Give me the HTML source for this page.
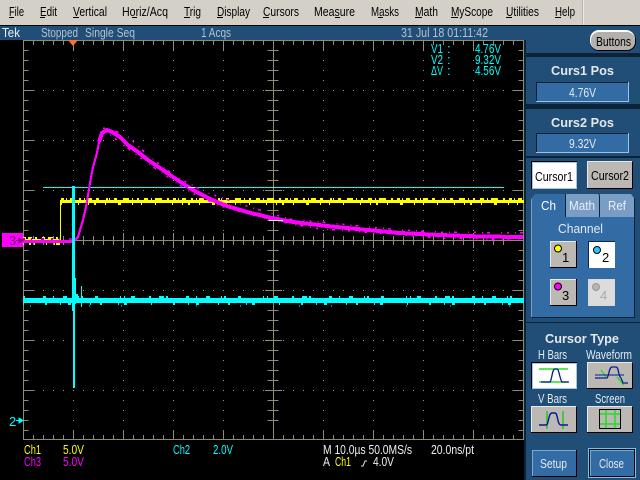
<!DOCTYPE html>
<html><head><meta charset="utf-8"><title>Tek</title>
<style>
html,body{margin:0;padding:0;background:#000;width:640px;height:480px;overflow:hidden}
svg{display:block}
text{font-family:"Liberation Sans",sans-serif;font-size:12px}
.m{font-size:13px;fill:#000}
.h{font-size:12.5px;fill:#b4c2d0}
.c{fill:#00ffff;font-size:13px}
.y{fill:#ffff00;font-size:13px}
.g{fill:#ff00ff;font-size:13px}
.w{fill:#f0f0f0;font-size:13px}
.t{fill:#e4e8ee;font-size:13px;font-weight:bold}
.l{fill:#e4eaf0;font-size:13px}
.k{fill:#000;font-size:13px}
.cr{shape-rendering:crispEdges}
</style></head><body>
<svg width="640" height="480" viewBox="0 0 640 480" xmlns="http://www.w3.org/2000/svg">
<rect width="640" height="480" fill="#000"/>
<!-- menu -->
<rect width="640" height="25" fill="#d4d0c8"/>
<rect x="582" y="0" width="1" height="25" fill="#b8b4ac"/>
<rect x="583" y="0" width="1" height="25" fill="#ece9e2"/>
<text class="m" x="9" y="16" textLength="15" lengthAdjust="spacingAndGlyphs">File</text>
<text class="m" x="40" y="16" textLength="17" lengthAdjust="spacingAndGlyphs">Edit</text>
<text class="m" x="73" y="16" textLength="34" lengthAdjust="spacingAndGlyphs">Vertical</text>
<text class="m" x="122" y="16" textLength="46" lengthAdjust="spacingAndGlyphs">Horiz/Acq</text>
<text class="m" x="184" y="16" textLength="17" lengthAdjust="spacingAndGlyphs">Trig</text>
<text class="m" x="217" y="16" textLength="33" lengthAdjust="spacingAndGlyphs">Display</text>
<text class="m" x="263" y="16" textLength="36" lengthAdjust="spacingAndGlyphs">Cursors</text>
<text class="m" x="314" y="16" textLength="41" lengthAdjust="spacingAndGlyphs">Measure</text>
<text class="m" x="371" y="16" textLength="28" lengthAdjust="spacingAndGlyphs">Masks</text>
<text class="m" x="415" y="16" textLength="23" lengthAdjust="spacingAndGlyphs">Math</text>
<text class="m" x="451" y="16" textLength="42" lengthAdjust="spacingAndGlyphs">MyScope</text>
<text class="m" x="506" y="16" textLength="33" lengthAdjust="spacingAndGlyphs">Utilities</text>
<text class="m" x="555" y="16" textLength="20" lengthAdjust="spacingAndGlyphs">Help</text>
<g fill="#000" class="cr">
<rect x="9" y="17" width="5" height="1"/><rect x="40" y="17" width="5" height="1"/><rect x="73" y="17" width="6" height="1"/>
<rect x="132" y="17" width="5" height="1"/><rect x="184" y="17" width="6" height="1"/><rect x="217" y="17" width="6" height="1"/>
<rect x="263" y="17" width="6" height="1"/><rect x="335" y="17" width="5" height="1"/><rect x="378" y="17" width="5" height="1"/>
<rect x="415" y="17" width="7" height="1"/><rect x="451" y="17" width="7" height="1"/><rect x="506" y="17" width="6" height="1"/><rect x="555" y="17" width="6" height="1"/>
</g>
<rect y="25" width="640" height="1" fill="#000"/>
<rect y="26" width="640" height="14" fill="#214e76"/>
<text x="2" y="37" style="fill:#e8eef4;font-size:13px" textLength="18" lengthAdjust="spacingAndGlyphs">Tek</text>
<text class="h" x="41" y="37" textLength="37" lengthAdjust="spacingAndGlyphs">Stopped</text>
<text class="h" x="85" y="37" textLength="50" lengthAdjust="spacingAndGlyphs">Single Seq</text>
<text class="h" x="201" y="37" textLength="30" lengthAdjust="spacingAndGlyphs">1 Acqs</text>
<text class="h" x="401" y="37" textLength="87" lengthAdjust="spacingAndGlyphs">31 Jul 18 01:11:42</text>

<!-- right panel -->
<rect x="524" y="40" width="116" height="440" fill="#214e76"/>
<rect x="524" y="53" width="116" height="4" fill="#0c2236"/>
<rect x="524" y="104" width="116" height="5" fill="#0c2236"/>
<rect x="524" y="156" width="116" height="2" fill="#0c2236"/>
<rect x="524" y="322" width="116" height="1" fill="#0c2236"/>
<rect x="524" y="40" width="2" height="440" fill="#0c2236"/>
<!-- Buttons pill -->
<rect x="590" y="31" width="46" height="20" rx="9" fill="#000"/>
<rect x="590" y="30" width="45" height="20" rx="9" fill="#fff"/>
<rect x="591" y="32" width="44" height="18" rx="8" fill="#b4b0ac"/>
<text class="k" x="596" y="46" textLength="35" lengthAdjust="spacingAndGlyphs">Buttons</text>

<!-- Curs pos -->
<text class="t" x="551" y="75" textLength="63" lengthAdjust="spacingAndGlyphs">Curs1 Pos</text>
<rect x="536" y="82" width="93" height="20" fill="#9fc0de"/><rect x="536" y="82" width="92" height="19" fill="#0c2236"/><rect x="537" y="83" width="91" height="18" fill="#336ca5"/>
<text class="l" x="569" y="97" textLength="27" lengthAdjust="spacingAndGlyphs">4.76V</text>
<text class="t" x="551" y="127" textLength="63" lengthAdjust="spacingAndGlyphs">Curs2 Pos</text>
<rect x="536" y="133" width="93" height="20" fill="#9fc0de"/><rect x="536" y="133" width="92" height="19" fill="#0c2236"/><rect x="537" y="134" width="91" height="18" fill="#336ca5"/>
<text class="l" x="569" y="148" textLength="27" lengthAdjust="spacingAndGlyphs">9.32V</text>

<!-- Cursor buttons -->
<rect x="531" y="161" width="46" height="28" fill="#000"/><rect x="532" y="162" width="45" height="27" fill="#a8c4dc"/><rect x="533" y="163" width="43" height="25" fill="#fff"/>
<text x="535" y="181" textLength="38" lengthAdjust="spacingAndGlyphs" style="font-size:12.5px;letter-spacing:0;fill:#000">Cursor1</text>
<rect x="587" y="162" width="46" height="27" fill="#000"/><rect x="587" y="161" width="45" height="27" fill="#e8e8e8"/><rect x="588" y="162" width="44" height="26" fill="#bcb8b4"/>
<text x="591" y="180" textLength="38" lengthAdjust="spacingAndGlyphs" style="font-size:12.5px;fill:#000">Cursor2</text>

<!-- Tabs -->
<path d="M531 199 L535 194 L565 194 L565 217 L531 217 Z" fill="#336ca5"/>
<path d="M566 194 L598 194 L599 196 L599 217 L566 217 Z" fill="#7a9dc6"/>
<path d="M600 194 L631 194 L634 198 L634 217 L600 217 Z" fill="#7a9dc6"/>
<rect x="531" y="217" width="103" height="100" fill="#336ca5"/>
<rect x="565" y="194" width="1" height="23" fill="#0c2236"/>
<rect x="599" y="196" width="1" height="21" fill="#0c2236"/>
<rect x="634" y="198" width="1" height="119" fill="#0c2236"/>
<rect x="531" y="317" width="104" height="1" fill="#0c2236"/>
<rect x="531" y="199" width="1" height="118" fill="#7a9dc6"/>
<text x="541" y="210" textLength="15" lengthAdjust="spacingAndGlyphs" style="font-size:13px;fill:#fff">Ch</text>
<text x="569" y="210" textLength="26" lengthAdjust="spacingAndGlyphs" style="font-size:13px;fill:#e8eef4">Math</text>
<text x="608" y="210" textLength="18" lengthAdjust="spacingAndGlyphs" style="font-size:13px;fill:#e8eef4">Ref</text>
<text class="l" x="558" y="233" textLength="45" lengthAdjust="spacingAndGlyphs">Channel</text>

<!-- Channel buttons -->
<rect x="550" y="241" width="27" height="27" fill="#000"/><rect x="550" y="241" width="26" height="26" fill="#e8e8e8"/><rect x="551" y="242" width="25" height="25" fill="#bcb8b4"/>
<circle cx="558" cy="248.500" r="3.500" fill="#ffff00" stroke="#000"/><text class="k" x="562" y="262">1</text>
<rect x="588" y="241" width="27" height="27" fill="#0a2a44"/><rect x="589" y="242" width="26" height="26" fill="#fff"/>
<circle cx="597" cy="250" r="3.500" fill="#22ccff" stroke="#000"/><text class="k" x="602" y="262">2</text>
<rect x="550" y="279" width="27" height="27" fill="#000"/><rect x="550" y="279" width="26" height="26" fill="#e8e8e8"/><rect x="551" y="280" width="25" height="25" fill="#bcb8b4"/>
<circle cx="558" cy="286.500" r="3.500" fill="#ff00ff" stroke="#000"/><text class="k" x="562" y="300">3</text>
<rect x="588" y="279" width="27" height="27" fill="#d8d8d8"/><rect x="589" y="280" width="25" height="25" fill="#dcdcdc"/>
<circle cx="596" cy="287" r="3.500" fill="#b4b4b4" stroke="#989898"/><text x="600" y="300" style="font-size:13px;fill:#aaa">4</text>

<!-- Cursor type -->
<text class="t" x="545" y="343" textLength="74" lengthAdjust="spacingAndGlyphs">Cursor Type</text>
<text class="l" x="538" y="359" textLength="29" lengthAdjust="spacingAndGlyphs">H Bars</text>
<text class="l" x="586" y="359" textLength="46" lengthAdjust="spacingAndGlyphs">Waveform</text>
<text class="l" x="538" y="403" textLength="29" lengthAdjust="spacingAndGlyphs">V Bars</text>
<text class="l" x="595" y="403" textLength="30" lengthAdjust="spacingAndGlyphs">Screen</text>

<rect x="531" y="362" width="46" height="27" fill="#000"/><rect x="532" y="363" width="45" height="26" fill="#a8c4dc"/><rect x="533" y="364" width="43" height="24" fill="#fff"/>
<path d="M539 369H568M539 382H568" stroke="#22e022" stroke-width="1.500" fill="none"/>
<path d="M541 382H550C552 380 552 369 555 369H557C559 369 560 380 562 382H569" stroke="#0a1a90" stroke-width="1.300" fill="none"/>
<rect x="587" y="363" width="46" height="26" fill="#000"/><rect x="587" y="362" width="45" height="26" fill="#e8e8e8"/><rect x="588" y="363" width="44" height="25" fill="#bcb8b4"/>
<path d="M601 370L606 377M617 377L624 385" stroke="#22e022" stroke-width="1.500" fill="none"/>
<path d="M595 378H607C609 376 609 367 612 367H616C619 367 618 376 621 378L623 383H628" stroke="#0a1a90" stroke-width="1.300" fill="none"/>
<path d="M595 375H624" stroke="#0a1a90" stroke-width="1" fill="none"/>

<rect x="531" y="407" width="46" height="26" fill="#000"/><rect x="531" y="406" width="45" height="26" fill="#e8e8e8"/><rect x="532" y="407" width="44" height="25" fill="#bcb8b4"/>
<path d="M547 411V429M563 411V429" stroke="#22c822" stroke-width="1.500" fill="none"/>
<path d="M539 425H546C549 425 548 413 552 413H555C558 413 557 425 561 425H568" stroke="#0a1a90" stroke-width="1.400" fill="none"/>
<rect x="587" y="407" width="46" height="26" fill="#000"/><rect x="587" y="406" width="45" height="26" fill="#e8e8e8"/><rect x="588" y="407" width="44" height="25" fill="#bcb8b4"/>
<rect x="599.500" y="409.500" width="21" height="19" fill="#bcb8b4" stroke="#000"/>
<path d="M600 414H620M600 424H620M606 410V428M615 410V428" stroke="#22e022" stroke-width="1.500" fill="none"/>

<!-- Setup / Close -->
<rect x="532" y="450" width="45" height="27" fill="#000"/><rect x="532" y="450" width="44" height="26" fill="#7fa6cc"/><rect x="533" y="451" width="43" height="25" fill="#336ca5"/>
<text class="l" x="540" y="468" textLength="27" lengthAdjust="spacingAndGlyphs">Setup</text>
<rect x="588" y="448" width="48" height="30" fill="#6cc4f4"/><rect x="589" y="449" width="46" height="28" fill="#000"/><rect x="590" y="450" width="44" height="26" fill="#7fa6cc"/><rect x="591" y="451" width="43" height="25" fill="#336ca5"/>
<text class="l" x="599" y="468" textLength="25" lengthAdjust="spacingAndGlyphs">Close</text>

<!-- graticule -->
<g class="cr" stroke="#8f8c74" fill="none">
<path d="M23.500 40V440M523.500 40V440M23 40.500H524M23 439.500H524M273.500 40V440M23 240.500H524" stroke-width="1"/>
<path stroke-dasharray="1 9" d="M73.500 50V430M123.500 50V430M173.500 50V430M223.500 50V430M323.500 50V430M373.500 50V430M423.500 50V430M473.500 50V430" stroke="#9a9a90"/>
<path stroke-dasharray="1 9" d="M33 90.500H513M33 140.500H513M33 190.500H513M33 290.500H513M33 340.500H513M33 390.500H513" stroke="#9a9a90"/>
<path stroke-dasharray="1 9" d="M33 42.500H523" stroke-width="5"/>
<path stroke-dasharray="1 49" d="M73 45H523" stroke-width="10"/>
<path stroke-dasharray="1 9" d="M33 437.500H523" stroke-width="5"/>
<path stroke-dasharray="1 49" d="M73 435H523" stroke-width="10"/>
<path stroke-dasharray="1 9" d="M26 50V440" stroke-width="5"/>
<path stroke-dasharray="1 49" d="M29 90V440" stroke-width="11"/>
<path stroke-dasharray="1 9" d="M521 50V440" stroke-width="5"/>
<path stroke-dasharray="1 49" d="M518 90V440" stroke-width="11"/>
<path stroke-dasharray="1 9" d="M273 50V430" stroke-width="11"/>
<path stroke-dasharray="1 49" d="M273.500 90V440" stroke-width="17"/>
<path stroke-dasharray="1 9" d="M33 240.500H513" stroke-width="9"/>
<path stroke-dasharray="1 49" d="M73 240.500H523" stroke-width="15"/>
</g>
<polygon points="68,40 78,40 73,46" fill="#ff7030"/>

<!-- cursor line -->
<rect x="43" y="187" width="461" height="1" fill="#00ffff"/>

<!-- yellow -->
<g class="cr" fill="none" stroke="#ffff00">
<rect x="60" y="200" width="464" height="3" fill="#ffff00" stroke="none"/>
<rect x="60" y="200" width="1" height="41" fill="#ffff00" stroke="none"/>
<rect x="23" y="239" width="38" height="3" fill="#ffff00" stroke="none"/>
<path stroke-width="2" d="M61 199H523" stroke-dasharray="3 2 1 3 4 5 2 3 1 2 5 4 3 7 2 1 1 4 3 6 6 3 1 4 2 5 4 3 1 3 7 5 2 4"/>
<path stroke-width="2" d="M61 204H523" stroke-dasharray="1 16 1 9 1 5 2 9 1 12 3 11 1 8 1 13"/>
<path stroke-width="2" d="M23 238H60" stroke-dasharray="3 2 4 3 2 5 3 3 5"/>
<path stroke-width="2" d="M23 244H60" stroke-dasharray="1 5 2 3 1 11 1 7 1"/>
</g>
<!-- magenta -->
<g class="cr" fill="none" stroke="#ff00ff" stroke-linejoin="round">
<path d="M23 241.500H75" stroke-width="3"/>
<path d="M23 239H75" stroke-width="2" stroke="#b000b0" stroke-dasharray="2 6 1 9 3 7"/>
<path d="M75 240L78 237L80 230L83 220L86 207L88 195L90 183L93 167L97 153L99 142L102 133" stroke-width="2.200"/>
<path d="M99 142L102 133L107 130L112 132L120 137L128 145L138 152L148 160L160 168L170 175L182 183L193 190L210 199L227 206L247 212L267 217L293 222L327 226L357 229L400 233L440 235L480 236.500L523 237" stroke-width="4"/>
<path d="M103 128L125 134L150 157L175 176L205 192L240 204L290 219L340 224L400 230L440 232L523 233" stroke-width="1.500" stroke-dasharray="2 6 1 4 3 11 1 5"/>
<path d="M110 135L130 150L160 172L190 192L220 206L270 220L320 229L380 233L440 238L523 240" stroke-width="1.500" stroke-dasharray="1 5 2 9 1 4 3 7"/>
</g>
<rect x="188" y="187" width="7" height="1" fill="#fff"/>
<rect x="269" y="220" width="14" height="1" fill="#fff"/>
<!-- cyan -->
<g class="cr" fill="none" stroke="#00ffff">
<rect x="23" y="298" width="501" height="5" fill="#00ffff" stroke="none"/>
<rect x="72" y="186" width="3" height="115" fill="#00ffff" stroke="none"/>
<rect x="72" y="300" width="3" height="11" fill="#00ffff" stroke="none"/>
<rect x="73" y="310" width="2" height="78" fill="#00ffff" stroke="none"/>
<rect x="75" y="278" width="1" height="26" fill="#00ffff" stroke="none"/>
<rect x="76" y="294" width="2" height="8" fill="#00ffff" stroke="none"/>
<rect x="81" y="286" width="1" height="21" fill="#00ffff" stroke="none"/>
<path stroke-width="2" d="M23 297H523" stroke-dasharray="2 18 3 7 1 9 4 11 1 2 2 12 3 22 1 3 1 6 4 14 2 8 5 2"/>
<path stroke-width="2" d="M23 304H523" stroke-dasharray="1 21 2 13 1 7 3 19 1 9 2 16 1 5 3 24"/>
<path stroke-width="1" d="M30 306H523" stroke-dasharray="1 58 1 31 1 74 1 43"/>
</g>

<!-- ref markers -->
<rect x="2" y="233" width="21" height="14" fill="#ff00ff"/>
<text x="9" y="245" style="font-size:13px;fill:#800080">3</text>
<path d="M16 240.500H23M19 238L23 240.500L19 243Z" stroke="#800080" fill="#800080"/>
<text class="c" x="9" y="426">2</text>
<path d="M16 420.500H23M19 418L23 420.500L19 423Z" stroke="#00ffff" fill="#00ffff"/>

<!-- readouts -->
<text class="c" x="431" y="53" textLength="12" lengthAdjust="spacingAndGlyphs">V1</text><text class="c" x="447" y="53">:</text><text class="c" x="475" y="53" textLength="26" lengthAdjust="spacingAndGlyphs">4.76V</text>
<text class="c" x="431" y="64" textLength="12" lengthAdjust="spacingAndGlyphs">V2</text><text class="c" x="447" y="64">:</text><text class="c" x="475" y="64" textLength="26" lengthAdjust="spacingAndGlyphs">9.32V</text>
<text class="c" x="431" y="75" textLength="12" lengthAdjust="spacingAndGlyphs">ΔV</text><text class="c" x="447" y="75">:</text><text class="c" x="475" y="75" textLength="26" lengthAdjust="spacingAndGlyphs">4.56V</text>

<!-- bottom status -->
<text class="y" x="24" y="454" textLength="17" lengthAdjust="spacingAndGlyphs">Ch1</text>
<text class="y" x="63" y="454" textLength="21" lengthAdjust="spacingAndGlyphs">5.0V</text>
<text class="c" x="173" y="454" textLength="17" lengthAdjust="spacingAndGlyphs">Ch2</text>
<text class="c" x="213" y="454" textLength="20" lengthAdjust="spacingAndGlyphs">2.0V</text>
<text class="g" x="24" y="466" textLength="17" lengthAdjust="spacingAndGlyphs">Ch3</text>
<text class="g" x="63" y="466" textLength="21" lengthAdjust="spacingAndGlyphs">5.0V</text>
<text class="w" x="323" y="454" textLength="89" lengthAdjust="spacingAndGlyphs">M 10.0µs 50.0MS/s</text>
<text class="w" x="431" y="454" textLength="43" lengthAdjust="spacingAndGlyphs">20.0ns/pt</text>
<text class="w" x="323" y="466" textLength="7" lengthAdjust="spacingAndGlyphs">A</text>
<text class="y" x="335" y="466" textLength="16" lengthAdjust="spacingAndGlyphs">Ch1</text>
<path d="M361 466H363L365 461H367" stroke="#e8e8e8" fill="none"/>
<text class="w" x="373" y="466" textLength="21" lengthAdjust="spacingAndGlyphs">4.0V</text>
</svg>
</body></html>
